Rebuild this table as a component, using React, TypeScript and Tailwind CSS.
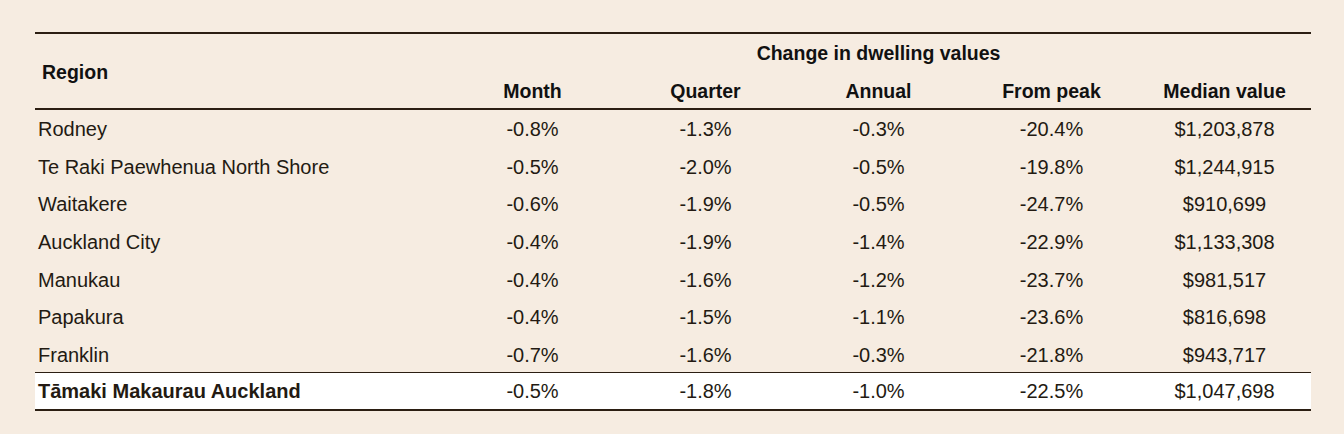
const rows = [
  ['Rodney', '-0.8%', '-1.3%', '-0.3%', '-20.4%', '$1,203,878'],
  ['Te Raki Paewhenua North Shore', '-0.5%', '-2.0%', '-0.5%', '-19.8%', '$1,244,915'],
  ['Waitakere', '-0.6%', '-1.9%', '-0.5%', '-24.7%', '$910,699'],
  ['Auckland City', '-0.4%', '-1.9%', '-1.4%', '-22.9%', '$1,133,308'],
  ['Manukau', '-0.4%', '-1.6%', '-1.2%', '-23.7%', '$981,517'],
  ['Papakura', '-0.4%', '-1.5%', '-1.1%', '-23.6%', '$816,698'],
  ['Franklin', '-0.7%', '-1.6%', '-0.3%', '-21.8%', '$943,717'],
];

const total = ['Tāmaki Makaurau Auckland', '-0.5%', '-1.8%', '-1.0%', '-22.5%', '$1,047,698'];

const cols = ['Month', 'Quarter', 'Annual', 'From peak', 'Median value'];

export default function App() {
  return (
    <div className="min-h-[434px] w-[1344px] bg-[#f6ece1] pt-[32px] pl-[35px] font-['Liberation_Sans',sans-serif] text-[#231a12]">
      <table className="w-[1276px] border-collapse table-fixed">
        <colgroup>
          <col className="w-[411px]" />
          {cols.map((c) => (
            <col key={c} className="w-[173px]" />
          ))}
        </colgroup>
        <thead className="border-t-2 border-b-2 border-[#2b1e12]">
          <tr className="h-[39px]">
            <th rowSpan={2} className="pl-[7px] pt-[4px] text-left text-[19.5px] font-bold text-[#111]">
              Region
            </th>
            <th colSpan={5} className="pt-[2px] text-center text-[19.5px] font-bold text-[#111]">
              Change in dwelling values
            </th>
          </tr>
          <tr className="h-[37px]">
            {cols.map((c) => (
              <th key={c} className="pt-[4px] text-center text-[19.5px] font-bold text-[#111]">
                {c}
              </th>
            ))}
          </tr>
        </thead>
        <tbody>
          {rows.map((r) => (
            <tr key={r[0]} className="h-[37.7px] text-[20px]">
              <td className="pl-[3px] pt-[2px]">{r[0]}</td>
              {r.slice(1).map((v, i) => (
                <td key={i} className="pt-[2px] text-center">
                  {v}
                </td>
              ))}
            </tr>
          ))}
          <tr className="h-[37px] border-t border-b-2 border-[#2b1e12] bg-white text-[20px]">
            <td className="pl-[3px] font-bold">{total[0]}</td>
            {total.slice(1).map((v, i) => (
              <td key={i} className="text-center">
                {v}
              </td>
            ))}
          </tr>
        </tbody>
      </table>
    </div>
  );
}
